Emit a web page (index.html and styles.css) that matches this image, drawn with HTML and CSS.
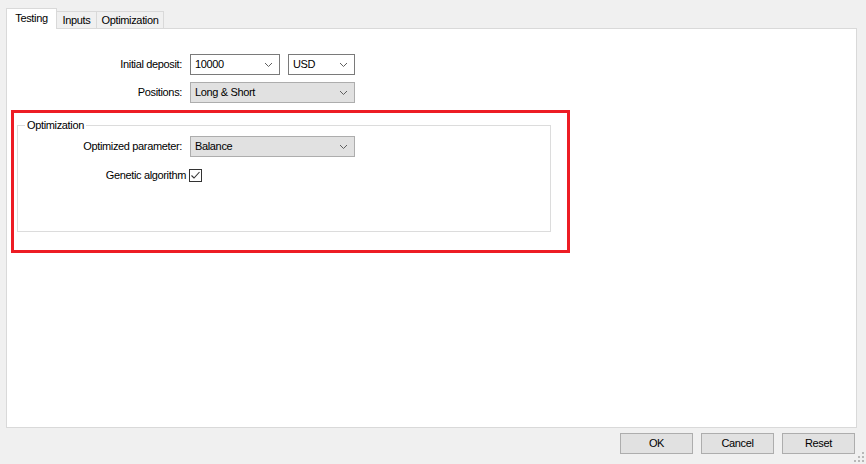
FILE: index.html
```html
<!DOCTYPE html>
<html lang="en">
<head>
<meta charset="utf-8">
<title>Tester settings</title>
<link rel="stylesheet" href="styles.css">
</head>
<body>
<div class="dialog">
  <div class="tabstrip">
    <div class="tab tab-active tab-testing">Testing</div>
    <div class="tab tab-inputs">Inputs</div>
    <div class="tab tab-optimization">Optimization</div>
  </div>

  <div class="page">
    <div class="form form-main">
      <span class="label">Initial deposit:</span>
      <div class="pair">
        <div class="combo combo-edit combo-deposit"><span>10000</span>
          <svg class="chevron" width="7" height="4" viewBox="0 0 7 4"><polyline points="0,0 3.5,3.5 7,0"/></svg>
        </div>
        <div class="combo combo-edit combo-currency"><span>USD</span>
          <svg class="chevron" width="7" height="4" viewBox="0 0 7 4"><polyline points="0,0 3.5,3.5 7,0"/></svg>
        </div>
      </div>
      <span class="label">Positions:</span>
      <div class="combo combo-list combo-wide"><span>Long &amp; Short</span>
        <svg class="chevron" width="7" height="4" viewBox="0 0 7 4"><polyline points="0,0 3.5,3.5 7,0"/></svg>
      </div>
    </div>

    <div class="highlight">
      <fieldset class="group">
        <legend>Optimization</legend>
        <div class="form form-group">
          <span class="label">Optimized parameter:</span>
          <div class="combo combo-list combo-wide"><span>Balance</span>
            <svg class="chevron" width="7" height="4" viewBox="0 0 7 4"><polyline points="0,0 3.5,3.5 7,0"/></svg>
          </div>
          <span class="label label-check">Genetic algorithm</span>
          <span class="checkbox">
            <svg width="11" height="11" viewBox="0 0 11 11"><polyline points="1.5,5.5 4,8 9.5,2"/></svg>
          </span>
        </div>
      </fieldset>
    </div>
  </div>

  <div class="buttons">
    <button class="btn">OK</button>
    <button class="btn">Cancel</button>
    <button class="btn">Reset</button>
  </div>

  <svg class="grip" width="10" height="10" viewBox="0 0 10 10">
    <rect x="8" y="0" width="2" height="2"/>
    <rect x="4" y="4" width="2" height="2"/>
    <rect x="8" y="4" width="2" height="2"/>
    <rect x="0" y="8" width="2" height="2"/>
    <rect x="4" y="8" width="2" height="2"/>
    <rect x="8" y="8" width="2" height="2"/>
  </svg>
</div>
</body>
</html>
```

FILE: styles.css
```css
* {
  box-sizing: border-box;
}

html,
body {
  margin: 0;
  padding: 0;
  background: #f0f0f0;
}

body {
  font-family: "Liberation Sans", Arial, sans-serif;
  font-size: 11px;
  line-height: 13px;
  letter-spacing: -0.35px;
  color: #000;
}

.dialog {
  position: relative;
  width: 866px;
  height: 464px;
  overflow: hidden;
}

/* Tab strip */
.tabstrip {
  display: flex;
  align-items: flex-end;
  height: 28px;
  padding-left: 6px;
}

.tab {
  display: flex;
  align-items: center;
  justify-content: center;
  height: 17px;
  border: 1px solid #d9d9d9;
  border-bottom: none;
  background: #f0f0f0;
  padding-top: 1px;
}

.tab-active {
  position: relative;
  z-index: 1;
  height: 21px;
  margin-bottom: -1px;
  background: #fff;
  padding-top: 0;
  padding-bottom: 2px;
}

.tab-testing { width: 51px; }
.tab-inputs { width: 41px; margin-left: -1px; }
.tab-optimization { width: 68px; margin-left: -1px; }

/* Tab page */
.page {
  margin-left: 6px;
  width: 851px;
  height: 400px;
  border: 1px solid #d9d9d9;
  background: #fff;
}

.form {
  display: grid;
  grid-template-columns: 176px auto;
  column-gap: 7px;
  row-gap: 7px;
  align-items: center;
  justify-items: start;
}

.form-main {
  margin-top: 25px;
}

.label {
  justify-self: end;
  padding-right: 1px;
  white-space: nowrap;
}

.pair {
  display: flex;
  gap: 8px;
}

/* Combo boxes */
.combo {
  position: relative;
  display: flex;
  align-items: center;
  height: 21px;
  padding-left: 4px;
  padding-bottom: 1px;
}

.combo-edit {
  background: #fff;
  border: 1px solid #7a7a7a;
}

.combo-list {
  background: #e1e1e1;
  border: 1px solid #adadad;
}

.combo-deposit { width: 90px; }
.combo-currency { width: 67px; }
.combo-wide { width: 165px; }

.chevron {
  position: absolute;
  right: 7px;
  top: 8px;
  fill: none;
  stroke: #5f5f5f;
  stroke-width: 1;
}

/* Highlighted group */
.highlight {
  margin: 7px 0 0 4px;
  width: 559px;
  height: 143px;
  border: 3px solid #ed1c24;
  padding: 6px 0 0 3px;
}

.group {
  margin: 0;
  padding: 0;
  width: 534px;
  height: 113px;
  border: 1px solid #dcdcdc;
  min-width: 0;
}

.group legend {
  margin-left: 7px;
  padding: 0 2px;
  line-height: 13px;
}

.form-group {
  grid-template-columns: 165px auto;
  row-gap: 11px;
  margin-top: 4px;
}

.label-check {
  margin-right: -4px;
  padding-top: 1px;
}

.checkbox {
  display: flex;
  align-items: center;
  justify-content: center;
  width: 13px;
  height: 13px;
  margin-left: -1px;
  border: 1px solid #333;
  background: #fff;
}

.checkbox svg {
  fill: none;
  stroke: #333;
  stroke-width: 1.1;
}

/* Dialog buttons */
.buttons {
  display: flex;
  justify-content: flex-end;
  gap: 8px;
  margin-top: 5px;
  padding-right: 11px;
}

.btn {
  width: 73px;
  height: 21px;
  margin: 0;
  padding: 0 0 1px;
  border: 1px solid #adadad;
  background: #e1e1e1;
  font: inherit;
  letter-spacing: inherit;
  color: #000;
}

.grip {
  position: absolute;
  right: 2px;
  bottom: 2px;
  fill: #b8b8b8;
}
```
